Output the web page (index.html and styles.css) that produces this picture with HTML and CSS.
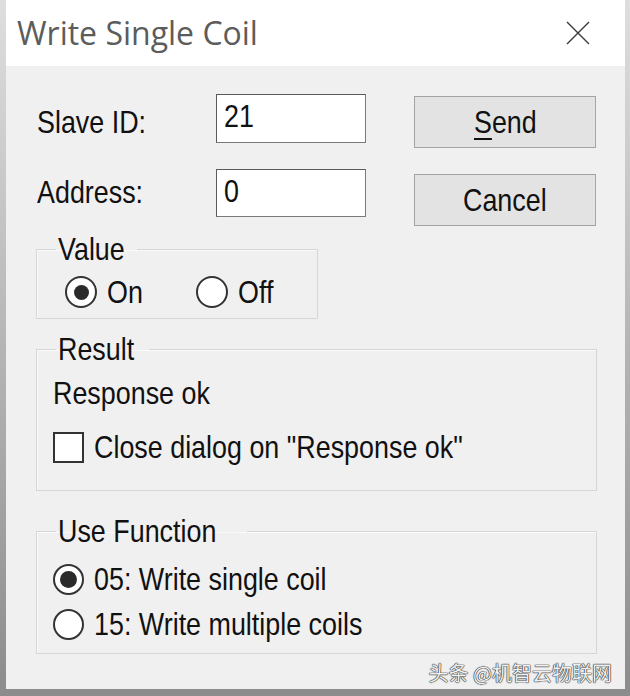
FILE: index.html
```html
<!DOCTYPE html>
<html>
<head>
<meta charset="utf-8">
<link rel="stylesheet" href="styles.css">
</head>
<body>
<div class="dialog">
  <div class="titlebar">
    <span class="title">Write Single Coil</span>
    <svg class="close" width="24" height="24" viewBox="0 0 24 24"><path d="M1 1 L23 23 M23 1 L1 23" stroke="#3a3a3a" stroke-width="1.4" fill="none"/></svg>
  </div>
  <div class="content ui">
    <div class="row row1">
      <span class="label l1"><span class="n">Slave ID:</span></span>
      <div class="field"><span class="n">21</span></div>
      <div class="btn b1"><span class="n c"><u>S</u>end</span></div>
    </div>
    <div class="row row2">
      <span class="label l2"><span class="n">Address:</span></span>
      <div class="field"><span class="n">0</span></div>
      <div class="btn b2"><span class="n c">Cancel</span></div>
    </div>
    <fieldset class="group g-value">
      <legend><span class="n">Value</span></legend>
      <div class="value-opts">
        <span class="opt"><span class="radio on"></span><span class="n">On</span></span>
        <span class="opt opt-off"><span class="radio"></span><span class="n">Off</span></span>
      </div>
    </fieldset>
    <fieldset class="group g-result">
      <legend><span class="n">Result</span></legend>
      <div class="result-body">
        <div class="resp"><span class="n">Response ok</span></div>
        <div class="check-row"><span class="checkbox"></span><span class="n">Close dialog on "Response ok"</span></div>
      </div>
    </fieldset>
    <fieldset class="group g-func">
      <legend><span class="n">Use Function</span></legend>
      <div class="func-body">
        <div class="func-row"><span class="radio on big"></span><span class="n">05: Write single coil</span></div>
        <div class="func-row"><span class="radio"></span><span class="n">15: Write multiple coils</span></div>
      </div>
    </fieldset>
    <div class="watermark">头条 @机智云物联网</div>
  </div>
</div>
</body>
</html>
```
FILE: styles.css
```css
html, body {
  margin: 0;
  padding: 0;
}
body {
  width: 630px;
  height: 696px;
  overflow: hidden;
  background: linear-gradient(#dedede, #8c8c8c);
}
.dialog {
  margin-left: 6px;
  width: 619px;
  height: 689px;
  background: #f0f0f0;
  display: flex;
  flex-direction: column;
}
.titlebar {
  height: 66px;
  flex: none;
  background: #ffffff;
  display: flex;
  align-items: center;
  justify-content: space-between;
  padding: 0 35px 0 11px;
  box-sizing: border-box;
}
.title {
  font-family: "Open Sans", "Noto Sans", sans-serif;
  font-size: 32px;
  line-height: 40px;
  color: #5c5c5c;
  font-weight: 400;
}
.close {
  display: block;
}
.ui {
  font-family: "Liberation Sans", Arial, sans-serif;
  font-size: 32px;
  color: #111111;
}
/* narrow system-dialog lettering */
.n {
  display: inline-block;
  transform: scaleX(0.84);
  transform-origin: left center;
  white-space: nowrap;
}
.n.c {
  transform-origin: center center;
}
.content {
  padding: 28px 0 0 30px;
  display: flex;
  flex-direction: column;
  align-items: flex-start;
}
.row {
  display: flex;
  align-items: flex-start;
}
.row2 {
  margin-top: 21px;
}
.label {
  width: 179px;
  margin-left: 1px;
  line-height: 36px;
}
.l1 { margin-top: 10px; }
.l2 { margin-top: 5px; }
.field {
  width: 150px;
  height: 49px;
  box-sizing: border-box;
  background: #ffffff;
  border: 1px solid #5a5a5a;
  border-right-color: #7a7a7a;
  border-bottom-color: #7a7a7a;
  padding: 3px 0 0 7px;
  line-height: 36px;
}
.row2 .field { height: 48px; }
.btn {
  width: 182px;
  height: 52px;
  box-sizing: border-box;
  margin-left: 48px;
  background: #e3e3e3;
  border: 1px solid #a4a4a4;
  display: flex;
  align-items: center;
  justify-content: center;
  line-height: 36px;
}
.b1 { margin-top: 2px; }
.b2 { margin-top: 5px; }
.btn u {
  text-decoration-thickness: 2px;
  text-underline-offset: 5px;
}
.group {
  margin: 0;
  padding: 0;
  border: 1px solid #d6d6d6;
  box-shadow: inset 1px 1px 0 #fafafa;
  box-sizing: border-box;
  min-width: 0;
}
.group legend {
  margin-left: 19px;
  padding: 0 0 0 2px;
  line-height: 36px;
}
.g-value {
  width: 282px;
  margin-top: 5px;
}
.value-opts {
  display: flex;
  padding: 9px 0 10px 28px;
}
.opt {
  display: flex;
  align-items: center;
  height: 32px;
  line-height: 32px;
}
.opt-off {
  margin-left: 46px;
}
.radio {
  width: 32px;
  height: 32px;
  box-sizing: border-box;
  border: 2px solid #333333;
  border-radius: 50%;
  background: #ffffff;
  display: flex;
  align-items: center;
  justify-content: center;
  flex: none;
  margin-right: 10px;
}
.radio.on::after {
  content: "";
  width: 15px;
  height: 15px;
  border-radius: 50%;
  background: #2a2a2a;
}
.radio.big::after {
  width: 17px;
  height: 17px;
}
.g-result {
  width: 561px;
  margin-top: 12px;
}
.result-body {
  padding: 8px 0 27px 16px;
}
.resp {
  line-height: 36px;
}
.check-row {
  margin-top: 21px;
  display: flex;
  align-items: center;
  height: 31px;
  line-height: 31px;
}
.checkbox {
  width: 31px;
  height: 31px;
  box-sizing: border-box;
  border: 2px solid #333333;
  background: #ffffff;
  margin-right: 10px;
  flex: none;
}
.g-func {
  width: 561px;
  margin-top: 22px;
}
.func-body {
  padding: 14px 0 13px 16px;
  display: flex;
  flex-direction: column;
  gap: 13px;
}
.func-row {
  display: flex;
  align-items: center;
  height: 32px;
  line-height: 32px;
}
.func-row .radio {
  width: 31px;
  height: 31px;
  margin-right: 10px;
}
.watermark {
  align-self: flex-end;
  margin-top: 9px;
  margin-right: 13px;
  font-family: "Noto Sans CJK SC", sans-serif;
  font-size: 20px;
  line-height: 20px;
  color: #f0f0f0;
  text-shadow: 0 0 1px #222, 0 0 1px #222, 0 0 1px #222;
}
```
